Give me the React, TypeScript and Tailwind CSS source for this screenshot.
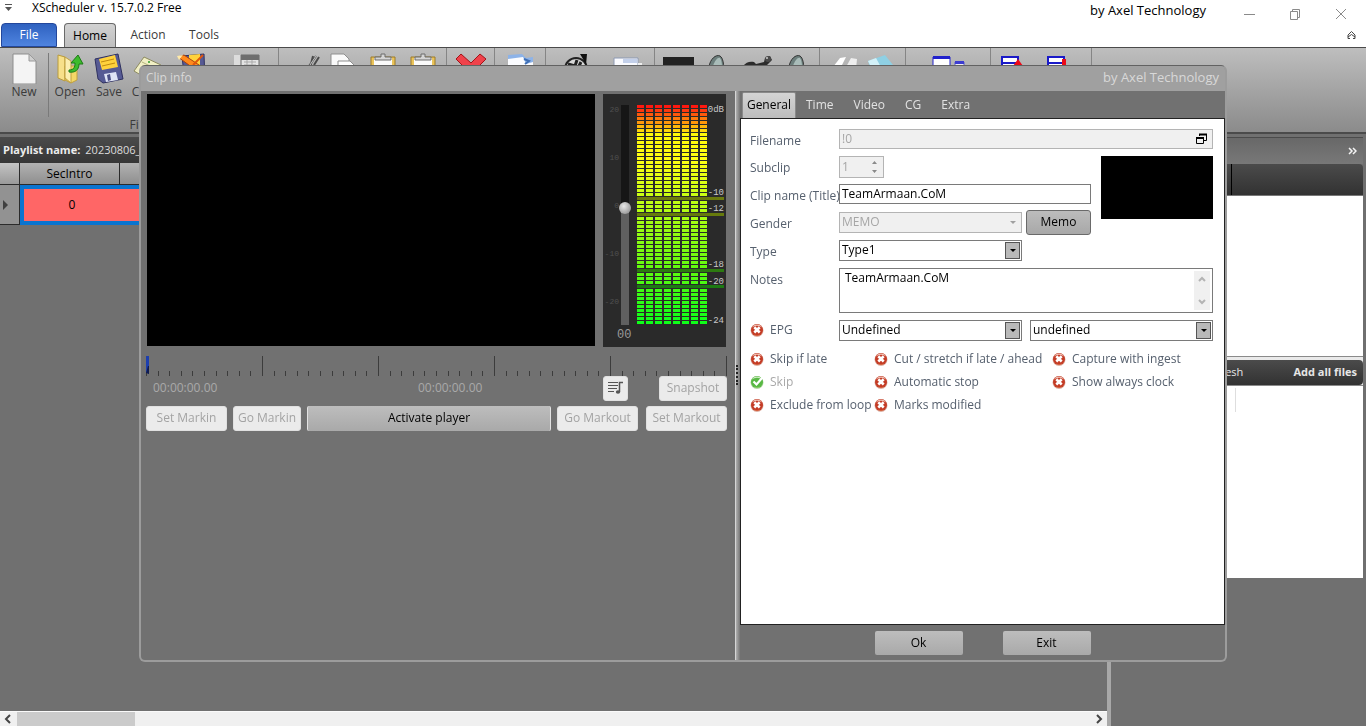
import { ReactNode } from "react";

const tabs = ["Time", "Video", "CG", "Extra"];

const meterLabels = [
    { text: "0dB", y: 18 },
    { text: "-10", y: 101 },
    { text: "-12", y: 117 },
    { text: "-18", y: 173 },
    { text: "-20", y: 190 },
    { text: "-24", y: 229 },
];

const meterMarks = [
    { y: 103, color: "#6b7a0e" },
    { y: 119, color: "#667a0c" },
    { y: 175, color: "#2c7a10" },
    { y: 191, color: "#1c7a12" },
];

// red -> orange -> yellow -> green, from top to bottom
function ledColor(row: number) {
    const stops = [
        [0, 255, 24, 16],
        [3, 255, 120, 10],
        [7, 255, 248, 10],
        [13, 255, 255, 20],
        [24, 190, 255, 20],
        [40, 100, 250, 15],
        [54, 15, 255, 25],
    ];
    let i = 0;
    while (i < stops.length - 2 && row > stops[i + 1][0]) i++;
    const a = stops[i];
    const b = stops[i + 1];
    const t = (row - a[0]) / (b[0] - a[0]);
    const c = [1, 2, 3].map((k) => Math.round(a[k] + (b[k] - a[k]) * t));
    return `rgb(${c[0]},${c[1]},${c[2]})`;
}

function Meter() {
    return (
        <svg className="shrink-0" width="91" height="253" viewBox="0 0 91 253">
            {Array.from({ length: 55 }, (_, r) =>
                Array.from({ length: 8 }, (_, c) => (
                    <rect key={r + "-" + c} x={2 + c * 9} y={11 + r * 4} width="7" height="3" fill={ledColor(r)} />
                ))
            )}
            {meterMarks.map((m) => (
                <rect key={m.y} x="2" y={m.y - 1} width="87" height="5" fill="#2a2a2a" />
            ))}
            {meterMarks.map((m) => (
                <rect key={m.y} x="2" y={m.y} width="87" height="3" fill={m.color} />
            ))}
            {meterLabels.map((l) => (
                <text key={l.text} x="89" y={l.y} textAnchor="end" fontSize="9" fontFamily="Liberation Mono, monospace" fill="#c8c8c8">
                    {l.text}
                </text>
            ))}
        </svg>
    );
}

function Timeline() {
    return (
        <svg className="block w-full" height="20" viewBox="0 0 581 20" preserveAspectRatio="none">
            {Array.from({ length: 51 }, (_, i) => (
                <rect key={i} x={Math.round(i * 11.6)} y={i % 10 === 0 ? 0 : 15} width="1" height={i % 10 === 0 ? 20 : 5} fill="#3c3c3c" />
            ))}
            <path d="M0 0h3v18l-3-2z" fill="#1d3fae" />
            <path d="M2 10h1v8l-3-1z" fill="#101c50" />
        </svg>
    );
}

function RibbonIcon({ name }: { name: string }) {
    const art: Record<string, ReactNode> = {
        new: (
            <>
                <path d="M6 1h16l7 7v23H6z" fill="#f4f4f4" stroke="#8d8d8d" />
                <path d="M22 1v7h7z" fill="#cfcfcf" stroke="#9a9a9a" />
            </>
        ),
        open: (
            <>
                <path d="M5 2l7 2v24l-7-3z" fill="#f7e08a" stroke="#b89a3c" />
                <path d="M12 13h12v14l-6 3-6-3z" fill="#f5d867" stroke="#c0a040" />
                <path d="M12 4l6 4v22l-6-5z" fill="#fbeeb0" stroke="#c0a040" />
                <path d="M16 17c5 0 6-3 6-7h-4l7-8 5 9h-4c0 6-4 9-10 8z" fill="#3dbb2c" stroke="#1c7a17" />
            </>
        ),
        save: (
            <>
                <path d="M3 6L26 1l5 25-20 4-5-4z" fill="#565a94" stroke="#2f3160" />
                <path d="M7 6l16-4 3 12-16 3z" fill="#ffd23c" />
                <path d="M9 9l13-3M10 13l13-3" stroke="#c08a10" />
                <path d="M12 21l12-2 2 8-12 2z" fill="#dfe3f5" />
                <path d="M15 22l3-1 1 6-3 1z" fill="#4a4e86" />
            </>
        ),
        close: (
            <>
                <path d="M4 18L14 4l17 8-10 16z" fill="#f1efc4" stroke="#8d8b60" />
                <path d="M12 9l12 6" stroke="#b4b47c" />
                <circle cx="19" cy="9" r="1" fill="#2a9a2a" />
            </>
        ),
        saveas: (
            <>
                <path d="M6 3l22-2 1 28-20 2z" fill="#565a94" stroke="#2f3160" />
                <path d="M13 2l11-1v13H13z" fill="#ffd23c" />
                <path d="M2 4l6-2 18 12-5 4z" fill="#ff8a1c" stroke="#a84410" />
                <path d="M17 12l10-10" stroke="#e0560c" strokeWidth="2" />
                <path d="M1 3l6-1-4 5z" fill="#ffe9a8" />
            </>
        ),
        calendar: (
            <>
                <path d="M2 2h7v28H2z" fill="#dcdcdc" />
                <path d="M9 2h18v28H9z" fill="#e4e4e4" stroke="#6c6c6c" />
                <path d="M9 2h18v5H9z" fill="#6e6e6e" />
                <path d="M12 9h12M12 12h12M15 7v20M20 7v20" stroke="#a9a9a9" />
            </>
        ),
        cut: (
            <>
                <path d="M21 16l9-13M24 15l3-12M28 12l5-8" fill="none" stroke="#4b4b4b" strokeWidth="2" />
                <path d="M22 15l8-12" stroke="#c9c9c9" strokeWidth="1" />
            </>
        ),
        copy: (
            <>
                <path d="M5 1h13l5 5v22H5z" fill="#fafafa" stroke="#8f8f8f" />
                <path d="M12 8h12l6 6v16H12z" fill="#fff" stroke="#8f8f8f" />
            </>
        ),
        paste: (
            <>
                <path d="M5 4h24v27H5z" fill="#e9c35a" stroke="#9c7a28" />
                <path d="M8 5h18v26H8z" fill="#fafafa" />
                <path d="M9 7V4h6V1h4v3h6v3z" fill="#d5d5d5" stroke="#6d6d6d" />
            </>
        ),
        remove: <path d="M2 6l5-5 10 9 9-9 6 5-10 10 10 12-5 4-10-11L7 31l-5-4 10-11z" fill="#f0424b" stroke="#a31218" />,
        folder: (
            <>
                <path d="M5 2l14-1 4 4 7-1v24H5z" fill="#8db3e8" />
                <path d="M5 6l15-2 3 7 7-2v20H5z" fill="#fbfcff" />
                <path d="M21 6l5 2-4 3" fill="none" stroke="#3f6fb5" strokeWidth="2" />
            </>
        ),
        film: (
            <>
                <circle cx="17" cy="16" r="11" fill="#d8d8d8" stroke="#222" strokeWidth="2" />
                <path d="M9 11l7 2 2-6M22 9l-3 6" fill="none" stroke="#222" strokeWidth="3" />
                <path d="M21 1h7l-1 11-3-6z" fill="#111" />
            </>
        ),
        doc: (
            <>
                <path d="M3 5h24v24H3z" fill="#fafbff" stroke="#8d9ab4" />
                <path d="M12 6h14v4H12z" fill="#c3d0ea" />
                <path d="M27 10h4v3h-4z" fill="#eee" />
            </>
        ),
        screen: <path d="M1 4h31v20H1z" fill="#222" />,
        speaker: (
            <>
                <path d="M7 14c1-8 7-13 11-11 3 2 4 7 4 20H7z" fill="#6d7f7d" stroke="#333" />
                <path d="M11 13c2-6 5-9 7-8 2 3 2 6 2 14h-9z" fill="#a9bcb9" />
            </>
        ),
        mic: (
            <>
                <path d="M1 13c3-4 7-5 11-4l2 2 8-2 1-4 5-2 2 4-5 5-11 1z" fill="#2c2c2c" />
                <circle cx="26" cy="6" r="3" fill="#4a4a4a" />
                <circle cx="25" cy="5" r="1" fill="#ccc" />
            </>
        ),
        pages: (
            <>
                <path d="M7 14l7-9 6-1-6 12z" fill="#fff" />
                <path d="M20 14l5-9 6 1-1 10z" fill="#eee" />
            </>
        ),
        bin: (
            <>
                <path d="M2 8L19 2l8 10 1 8H6z" fill="#8fd0e4" />
                <path d="M2 8l8-3 6 11H6z" fill="#d3f1f8" />
            </>
        ),
        windows: (
            <>
                <path d="M2 4h17v20H2z" fill="#fff" stroke="#2222cc" />
                <path d="M2 3h17v3H2z" fill="#2222cc" />
                <path d="M24 9h9v12h-9z" fill="#eee" stroke="#5a5ad0" />
                <path d="M24 8h9v3h-9z" fill="#3c3cd0" />
            </>
        ),
        listup: (
            <>
                <path d="M2 4h16v22H2z" fill="#fff" stroke="#1a1ac8" strokeWidth="2" />
                <path d="M2 4h16M2 10h16" stroke="#1a1ac8" strokeWidth="2" />
                <path d="M18 6l5 7H13z" fill="#ec0a18" />
            </>
        ),
        listdown: (
            <>
                <path d="M4 4h16v22H4z" fill="#fff" stroke="#1a1ac8" strokeWidth="2" />
                <path d="M4 4h16M4 10h16" stroke="#1a1ac8" strokeWidth="2" />
                <path d="M18 6h4v6h2l-4 6-4-6h2z" fill="#ec0a18" />
            </>
        ),
    };
    return (
        <svg width="34" height="31" viewBox="0 0 34 31" aria-hidden="true">
            {art[name]}
        </svg>
    );
}

function RibbonButton({ icon, label, className = "w-10" }: { icon: string; label?: string; className?: string }) {
    return (
        <button type="button" aria-label={label ?? icon} className={"flex flex-col items-center shrink-0 text-[#3a3a3a] leading-4 " + className}>
            <RibbonIcon name={icon} />
            {label}
        </button>
    );
}

function RibbonGroup({ className, children }: { className: string; children: ReactNode }) {
    return <div className={"flex items-start shrink-0 pt-[5px] border-r border-[#858585] " + className}>{children}</div>;
}

function Ribbon() {
    return (
        <div className="flex h-[87px] border-y border-b-2 border-[#4a4a4a] bg-linear-to-b from-[#bebebe] to-[#8b8b8b]">
            <div className="w-[279px] shrink-0 flex flex-col justify-between border-r border-[#858585]">
                <div className="flex items-start pt-[5px]">
                    <RibbonButton icon="new" label="New" className="w-12" />
                    <div className="w-[2px] h-16 bg-[#cfcfcf] border-l border-[#7a7a7a]" />
                    <RibbonButton icon="open" label="Open" className="w-[42px]" />
                    <RibbonButton icon="save" label="Save" className="w-9" />
                    <RibbonButton icon="close" label="Close" />
                    <RibbonButton icon="saveas" className="w-[52px]" />
                    <RibbonButton icon="calendar" className="w-[60px]" />
                </div>
                <div className="text-center leading-4 text-[#3a3a3a]">File</div>
            </div>
            <RibbonGroup className="w-[168px] justify-center">
                <RibbonButton icon="cut" />
                <RibbonButton icon="copy" />
                <RibbonButton icon="paste" />
                <RibbonButton icon="paste" />
            </RibbonGroup>
            <RibbonGroup className="w-12 justify-center">
                <RibbonButton icon="remove" />
            </RibbonGroup>
            <RibbonGroup className="w-[51px] justify-center">
                <RibbonButton icon="folder" />
            </RibbonGroup>
            <RibbonGroup className="w-[109px] justify-around pl-1">
                <RibbonButton icon="film" />
                <RibbonButton icon="doc" />
            </RibbonGroup>
            <RibbonGroup className="w-[165px] justify-end">
                <RibbonButton icon="screen" />
                <RibbonButton icon="speaker" />
                <RibbonButton icon="mic" />
                <RibbonButton icon="speaker" />
            </RibbonGroup>
            <RibbonGroup className="w-[86px] justify-center">
                <RibbonButton icon="pages" />
                <RibbonButton icon="bin" />
            </RibbonGroup>
            <RibbonGroup className="w-[85px] justify-center">
                <RibbonButton icon="windows" />
            </RibbonGroup>
            <RibbonGroup className="w-[101px] pl-1">
                <RibbonButton icon="listup" className="w-11" />
                <RibbonButton icon="listdown" className="w-11" />
            </RibbonGroup>
        </div>
    );
}

function TitleBar() {
    return (
        <header className="bg-white">
            <div className="flex h-[22px] items-start">
                <svg className="mt-1 ml-1" width="9" height="8" viewBox="0 0 9 8">
                    <path d="M1 0h7v1H1zM1 3h7L4.500 7z" fill="#555" />
                </svg>
                <h1 className="ml-[19px] leading-4 text-black">XScheduler v. 15.7.0.2 Free</h1>
                <span className="ml-auto text-[13px] leading-5 text-black">by Axel Technology</span>
                <div className="flex ml-[38px] mt-2 mr-[19px] gap-[34px] text-[#8a8a8a]">
                    <button type="button" aria-label="Minimize">
                        <svg width="11" height="12" viewBox="0 0 11 12">
                            <path d="M0 6.500h11" stroke="currentColor" />
                        </svg>
                    </button>
                    <button type="button" aria-label="Restore">
                        <svg width="12" height="12" viewBox="0 0 12 12" fill="none" stroke="currentColor">
                            <path d="M1.500 3.500h7v8h-7zM3.500 3V1.500h7v8H9" />
                        </svg>
                    </button>
                    <button type="button" aria-label="Close">
                        <svg width="12" height="12" viewBox="0 0 12 12" stroke="currentColor">
                            <path d="M1 1l10 10M11 1L1 11" />
                        </svg>
                    </button>
                </div>
            </div>
            <nav className="flex h-[25px] items-stretch pt-px">
                <button type="button" className="w-14 ml-px rounded-t-sm border border-[#23479c] bg-linear-to-b from-[#2f62c0] to-[#4f84e0] text-white">File</button>
                <button type="button" className="w-[52px] ml-[7px] -mb-px pb-px rounded-t-sm border border-b-0 border-[#6a6a6a] bg-linear-to-b from-[#d2d2d2] to-[#bebebe] text-black">Home</button>
                <button type="button" className="w-16 text-[#3a3a3a]">Action</button>
                <button type="button" className="w-12 text-[#3a3a3a]">Tools</button>
                <button type="button" aria-label="Collapse ribbon" className="ml-auto mr-[10px]">
                    <svg width="9" height="10" viewBox="0 0 9 10" fill="none" stroke="#444">
                        <path d="M1 5l3.500-3.500L8 5v2L4.500 4.500 1 7zM1 7v1.500h2M8 7v1.500H6" />
                    </svg>
                </button>
            </nav>
        </header>
    );
}

function Playlist() {
    return (
        <section className="flex-1 min-w-0 flex flex-col">
            <div className="mt-[3px] h-[26px] flex items-center gap-[5px] pl-[3px] text-[11px] bg-linear-to-b from-[#4b4b4b] to-[#363636]">
                <span className="font-bold text-[#ececec]">Playlist name:</span>
                <span className="text-[#dcdcdc]">20230806_</span>
            </div>
            <table className="w-full table-fixed border-separate border-spacing-0">
                <thead>
                    <tr className="h-[22px] text-black">
                        <th className="w-5 border-r border-b border-[#2b2b2b] bg-linear-to-b from-[#c4c4c4] to-[#9a9a9a]" />
                        <th className="w-[100px] border-r border-b border-[#2b2b2b] bg-linear-to-b from-[#b2b2b2] to-[#8f8f8f] font-normal leading-4">SecIntro</th>
                        <th className="border-b border-[#2b2b2b] bg-linear-to-b from-[#b2b2b2] to-[#8f8f8f]" />
                    </tr>
                </thead>
                <tbody>
                    <tr className="h-10">
                        <td className="border-r border-b border-[#2b2b2b] bg-[#929292]">
                            <svg className="ml-[3px]" width="6" height="10" viewBox="0 0 6 10">
                                <path d="M0 0l5 5-5 5z" fill="#3f3f3f" />
                            </svg>
                        </td>
                        <td className="border-y-[4px] border-l-[4px] border-[#0a74cf] bg-[#ff6666] text-center leading-4">0</td>
                        <td className="border-y-[4px] border-[#0a74cf] bg-[#ff6666]" />
                    </tr>
                </tbody>
            </table>
            <div className="mt-auto h-[15px] flex items-center bg-[#f0f0f0] border-t border-[#fafafa]">
                <svg className="w-[17px]" height="10" viewBox="0 0 17 10">
                    <path d="M10 1L6 5l4 4" fill="none" stroke="#444" strokeWidth="2" />
                </svg>
                <div className="w-[118px] h-full bg-[#cbcbcb]" />
                <svg className="ml-auto w-[17px]" height="10" viewBox="0 0 17 10">
                    <path d="M7 1l4 4-4 4" fill="none" stroke="#444" strokeWidth="2" />
                </svg>
            </div>
        </section>
    );
}

function FilesPanel() {
    return (
        <aside className="w-[259px] shrink-0 flex flex-col border-l-4 border-r-[3px] border-l-[#a8a8a8] border-r-[#6f6f6f] pt-[3px]">
            <div className="h-[27px] flex items-center justify-end pr-[6px] border-t border-[#4a4a4a] bg-linear-to-b from-[#686868] to-[#787878]">
                <svg width="9" height="8" viewBox="0 0 9 8" fill="none" stroke="#f4f4f4" strokeWidth="1.500">
                    <path d="M1 1l3 3-3 3M5 1l3 3-3 3" />
                </svg>
            </div>
            <div className="h-8 flex rounded-tr-sm bg-linear-to-b from-[#4b4b4b] to-[#323232] border-b border-[#777]">
                <div className="w-[121px] border-r border-black" />
            </div>
            <div className="h-[161px] bg-white border-b border-[#8a8a8a]" />
            <div className="bg-[#eaeaea] pt-[3px]">
                <div className="h-[25px] flex items-center justify-between pl-[93px] pr-[6px] rounded-r-sm bg-linear-to-b from-[#4b4b4b] to-[#323232] text-[11px] text-[#e6e6e6]">
                    <button type="button">Refresh</button>
                    <button type="button" className="font-bold">Add all files</button>
                </div>
            </div>
            <div className="h-[193px] bg-white pt-[2px] border-t border-[#8a8a8a]">
                <div className="w-[125px] h-6 border-r border-[#dedede]" />
            </div>
        </aside>
    );
}

function PlainButton({ children, className = "" }: { children: ReactNode; className?: string }) {
    return (
        <button type="button" className={"h-[25px] shrink-0 rounded-[3px] bg-[#ebebeb] border border-[#e0e0e0] text-[#a3a3a3] leading-4 " + className}>
            {children}
        </button>
    );
}

function Player() {
    return (
        <section className="flex-1 min-w-0 pt-[3px] pl-[5px] pr-2">
            <div className="flex gap-2 px-px">
                <div className="flex-1 h-[252px] bg-black" />
                <div className="w-[123px] h-[253px] flex bg-[#2a2a2a]">
                    <div className="flex flex-col w-8 shrink-0 pt-[11px]">
                        <div className="flex justify-end pr-1">
                            <div className="flex flex-col pt-[1px] text-[8px] leading-[8px] gap-10 text-right text-[#505050] font-['Liberation_Mono',monospace]">
                                <span>20</span>
                                <span>10</span>
                                <span>0</span>
                                <span>-10</span>
                                <span>-20</span>
                            </div>
                            <input
                                type="range"
                                aria-label="Volume"
                                min="0"
                                max="100"
                                defaultValue="53"
                                className="appearance-none w-3 h-[220px] [writing-mode:vertical-lr] [direction:rtl] bg-no-repeat bg-center bg-size-[8px_100%] bg-linear-to-b from-[#161616] from-47% to-[#606060] to-47% [&::-webkit-slider-thumb]:appearance-none [&::-webkit-slider-thumb]:size-3 [&::-webkit-slider-thumb]:rounded-full [&::-webkit-slider-thumb]:bg-radial-[at_40%_35%] [&::-webkit-slider-thumb]:from-[#e8e8e8] [&::-webkit-slider-thumb]:to-[#808080]"
                            />
                        </div>
                        <span className="pl-[14px] text-[12px] leading-5 text-[#9a9a9a] font-['Liberation_Mono',monospace]">00</span>
                    </div>
                    <Meter />
                </div>
            </div>
            <div className="mt-[9px]">
                <Timeline />
            </div>
            <div className="flex items-center h-[25px] text-[#a9a9a9]">
                <span className="w-[265px] pl-[7px]">00:00:00.00</span>
                <span className="pl-[7px]">00:00:00.00</span>
                <PlainButton className="ml-auto w-[25px] grid place-items-center">
                    <svg width="16" height="14" viewBox="0 0 16 14" fill="none" stroke="#555">
                        <path d="M0 1.500h10M0 4.500h10M0 7.500h9M0 10.500h6" />
                        <path d="M11.500 11V1.500H15" strokeWidth="1.500" />
                        <ellipse cx="10" cy="11" rx="2.200" ry="1.800" fill="#555" stroke="none" />
                    </svg>
                </PlainButton>
                <PlainButton className="ml-[31px] w-[68px]">Snapshot</PlainButton>
            </div>
            <div className="mt-[5px] flex gap-[6px]">
                <PlainButton className="w-[81px]">Set Markin</PlainButton>
                <PlainButton className="w-[68px]">Go Markin</PlainButton>
                <button type="button" className="flex-1 h-[25px] border-x border-[#e2e2e2] rounded-xs bg-linear-to-b from-[#bdbdbd] to-[#a9a9a9] text-black leading-4">
                    Activate player
                </button>
                <PlainButton className="w-[81px]">Go Markout</PlainButton>
                <PlainButton className="w-[81px] ml-[2px]">Set Markout</PlainButton>
            </div>
        </section>
    );
}

function Arrow({ color = "#000" }: { color?: string }) {
    return (
        <svg width="6" height="3" viewBox="0 0 6 3">
            <path d="M0 0h6L3 3z" fill={color} />
        </svg>
    );
}

function Select({ id, value, disabled = false, label }: { id?: string; value: string; disabled?: boolean; label?: string }) {
    return (
        <div className="relative w-[183px] h-[21px] shrink-0">
            <select
                id={id}
                aria-label={label}
                disabled={disabled}
                className={"appearance-none w-full h-full border pl-[2px] leading-4 opacity-100 " + (disabled ? "border-[#b4b4b4] bg-[#f0f0f0] text-[#a6a6a6]" : "border-[#7a7a7a] bg-white text-black")}
            >
                <option>{value}</option>
            </select>
            <span className={"absolute right-[2px] inset-y-[2px] w-[15px] grid place-items-center pointer-events-none " + (disabled ? "" : "border border-[#555] bg-[#b9b9b9]")}>
                <Arrow color={disabled ? "#a0a0a0" : "#000"} />
            </span>
        </div>
    );
}

function Check({ text, on = false, className = "" }: { text: string; on?: boolean; className?: string }) {
    return (
        <label className={"flex items-center gap-[6px] h-[21px] whitespace-nowrap " + (on ? "text-[#a8a8a8] " : "text-[#56606e] ") + className}>
            <input type="checkbox" defaultChecked={on} disabled={on} className="sr-only" />
            <svg width="14" height="14" viewBox="0 0 14 14" aria-hidden="true">
                <circle cx="7" cy="7.500" r="6.500" fill={on ? "#b4d8a4" : "#dcb0a4"} />
                <circle cx="7" cy="7" r="6" fill={on ? "#58b844" : "#c43c26"} />
                <path d="M1.800 4.500a6 6 0 0 1 10.400 0 9 9 0 0 0-10.400 0z" fill={on ? "#cdebc2" : "#f0c0b4"} />
                <path d="M4 11.500a6 4 0 0 0 6 0 6 6 0 0 1-6 0z" fill={on ? "#d8ff9c" : "#ffb060"} />
                {on ? (
                    <path d="M3.500 6.500l3 3 6-7" fill="none" stroke="#fff" strokeWidth="2.200" />
                ) : (
                    <path d="M4.300 4.300l5.400 5.200M9.700 4.300L4.300 9.500" stroke="#fff" strokeWidth="2.600" />
                )}
            </svg>
            {text}
        </label>
    );
}

function FieldLabel({ htmlFor, children }: { htmlFor: string; children: ReactNode }) {
    return (
        <label htmlFor={htmlFor} className="w-[89px] shrink-0 pt-[3px] leading-[18px] whitespace-nowrap">
            {children}
        </label>
    );
}

function GeneralForm() {
    return (
        <form className="flex-1 flex flex-col gap-[7px] pt-[10px] pl-[9px] pr-[11px] bg-white border border-[#222] text-[#56606e]">
            <div className="flex h-5">
                <FieldLabel htmlFor="filename">Filename</FieldLabel>
                <div className="flex-1 flex items-center h-5 pr-1 border border-[#b4b4b4] bg-[#f0f0f0]">
                    <input id="filename" type="text" disabled defaultValue="!0" className="flex-1 min-w-0 pl-[2px] text-[#a6a6a6]" />
                    <button type="button" aria-label="Browse">
                        <svg width="12" height="12" viewBox="0 0 12 12" fill="none" stroke="#000">
                            <path d="M0.500 4.500h7v6h-7zM3.500 3V1.500h7v6H8" />
                            <path d="M0 5h8M3 1.500h8" strokeWidth="2" />
                        </svg>
                    </button>
                </div>
            </div>
            <div className="flex gap-[10px]">
                <div className="flex-1 flex flex-col gap-[7px]">
                    <div className="flex h-[21px]">
                        <FieldLabel htmlFor="subclip">Subclip</FieldLabel>
                        <div className="flex w-[45px] h-[22px] items-center pr-[6px] border border-[#b4b4b4] bg-[#f0f0f0]">
                            <input id="subclip" type="text" disabled defaultValue="1" className="flex-1 min-w-0 pl-[2px] text-[#a6a6a6]" />
                            <svg width="5" height="12" viewBox="0 0 5 12" fill="#8a8a8a">
                                <path d="M0 3L2.500 0 5 3zM0 9h5l-2.500 3z" />
                            </svg>
                        </div>
                    </div>
                    <div className="flex h-[21px]">
                        <FieldLabel htmlFor="clipname">Clip name (Title)</FieldLabel>
                        <input id="clipname" type="text" defaultValue="TeamArmaan.CoM" className="flex-1 min-w-0 h-5 pl-[2px] border border-[#7a7a7a] text-black" />
                    </div>
                    <div className="flex h-[21px]">
                        <FieldLabel htmlFor="gender">Gender</FieldLabel>
                        <div className="flex items-center gap-1">
                            <Select id="gender" value="MEMO" disabled />
                            <button type="button" className="w-[65px] h-[25px] rounded-[3px] border border-[#6a6a6a] bg-linear-to-b from-[#bcbcbc] to-[#a8a8a8] text-black leading-4">
                                Memo
                            </button>
                        </div>
                    </div>
                </div>
                <div className="w-28 h-[63px] bg-black" />
            </div>
            <div className="flex h-[21px]">
                <FieldLabel htmlFor="type">Type</FieldLabel>
                <Select id="type" value="Type1" />
            </div>
            <div className="flex">
                <FieldLabel htmlFor="notes">Notes</FieldLabel>
                <div className="flex-1 flex h-[45px] border border-[#7a7a7a] p-[2px]">
                    <textarea id="notes" defaultValue="TeamArmaan.CoM" className="flex-1 min-w-0 resize-none pl-[3px] leading-[14px] overflow-hidden text-black" />
                    <div className="w-4 flex flex-col items-center justify-between py-1 bg-[#f0f0f0]">
                        <svg width="8" height="8" viewBox="0 0 8 8" fill="none" stroke="#b4b4b4" strokeWidth="2">
                            <path d="M1 6l3-3 3 3" />
                        </svg>
                        <svg width="8" height="8" viewBox="0 0 8 8" fill="none" stroke="#b4b4b4" strokeWidth="2">
                            <path d="M1 2l3 3 3-3" />
                        </svg>
                    </div>
                </div>
            </div>
            <div className="flex">
                <Check text="EPG" className="w-[89px]" />
                <div className="flex-1 flex justify-between">
                    <Select label="EPG category" value="Undefined" />
                    <Select label="EPG subcategory" value="undefined" />
                </div>
            </div>
            <div className="grid grid-cols-[124px_178px_1fr] gap-y-[2px] pt-px">
                <Check text="Skip if late" />
                <Check text="Cut / stretch if late / ahead" />
                <Check text="Capture with ingest" />
                <Check text="Skip" on />
                <Check text="Automatic stop" />
                <Check text="Show always clock" />
                <Check text="Exclude from loop" />
                <Check text="Marks modified" />
            </div>
        </form>
    );
}

function ClipDialog() {
    return (
        <div role="dialog" aria-label="Clip info" className="w-[1088px] max-w-full min-h-[597px] flex flex-col rounded-md border-2 border-t border-[#9c9c9c] border-t-[#626262] bg-[#717171]">
            <div className="h-[25px] shrink-0 flex items-center justify-between pl-[5px] pr-[6px] rounded-t-sm bg-[#a0a0a0] text-[#d8d8d8]">
                <h2>Clip info</h2>
                <span className="text-[13px]">by Axel Technology</span>
            </div>
            <div className="flex-1 flex">
                <Player />
                <div className="w-[5px] flex items-center border-l border-[#d6d6d6] bg-linear-to-r from-[#b0b0b0] to-[#777]">
                    <div className="h-5 border-l-2 border-dotted border-[#222]" />
                </div>
                <section className="w-[485px] flex flex-col pt-px">
                    <div className="flex h-[26px] text-[#e2e2e2]">
                        <button type="button" className="w-[54px] ml-[2px] rounded-t-xs border border-b-0 border-[#8a8a8a] bg-linear-to-b from-[#d4d4d4] to-[#bdbdbd] text-black">
                            General
                        </button>
                        {tabs.map((t) => (
                            <button type="button" key={t} className="px-[10px]">
                                {t}
                            </button>
                        ))}
                    </div>
                    <GeneralForm />
                    <div className="h-[35px] shrink-0 flex items-center justify-center gap-10 pt-[2px]">
                        <button type="button" className="w-[88px] h-6 rounded-xs bg-linear-to-b from-[#bdbdbd] to-[#a9a9a9] text-black">Ok</button>
                        <button type="button" className="w-[88px] h-6 rounded-xs bg-linear-to-b from-[#bdbdbd] to-[#a9a9a9] text-black">Exit</button>
                    </div>
                </section>
            </div>
        </div>
    );
}

export default function App() {
    return (
        <div className="min-h-screen flex flex-col bg-[#707070] text-[12px] font-['Open_Sans','Noto_Sans',sans-serif]">
            <TitleBar />
            <Ribbon />
            <main className="flex-1 flex">
                <Playlist />
                <FilesPanel />
            </main>
            <div className="fixed inset-0 flex items-center justify-center">
                <ClipDialog />
            </div>
        </div>
    );
}
